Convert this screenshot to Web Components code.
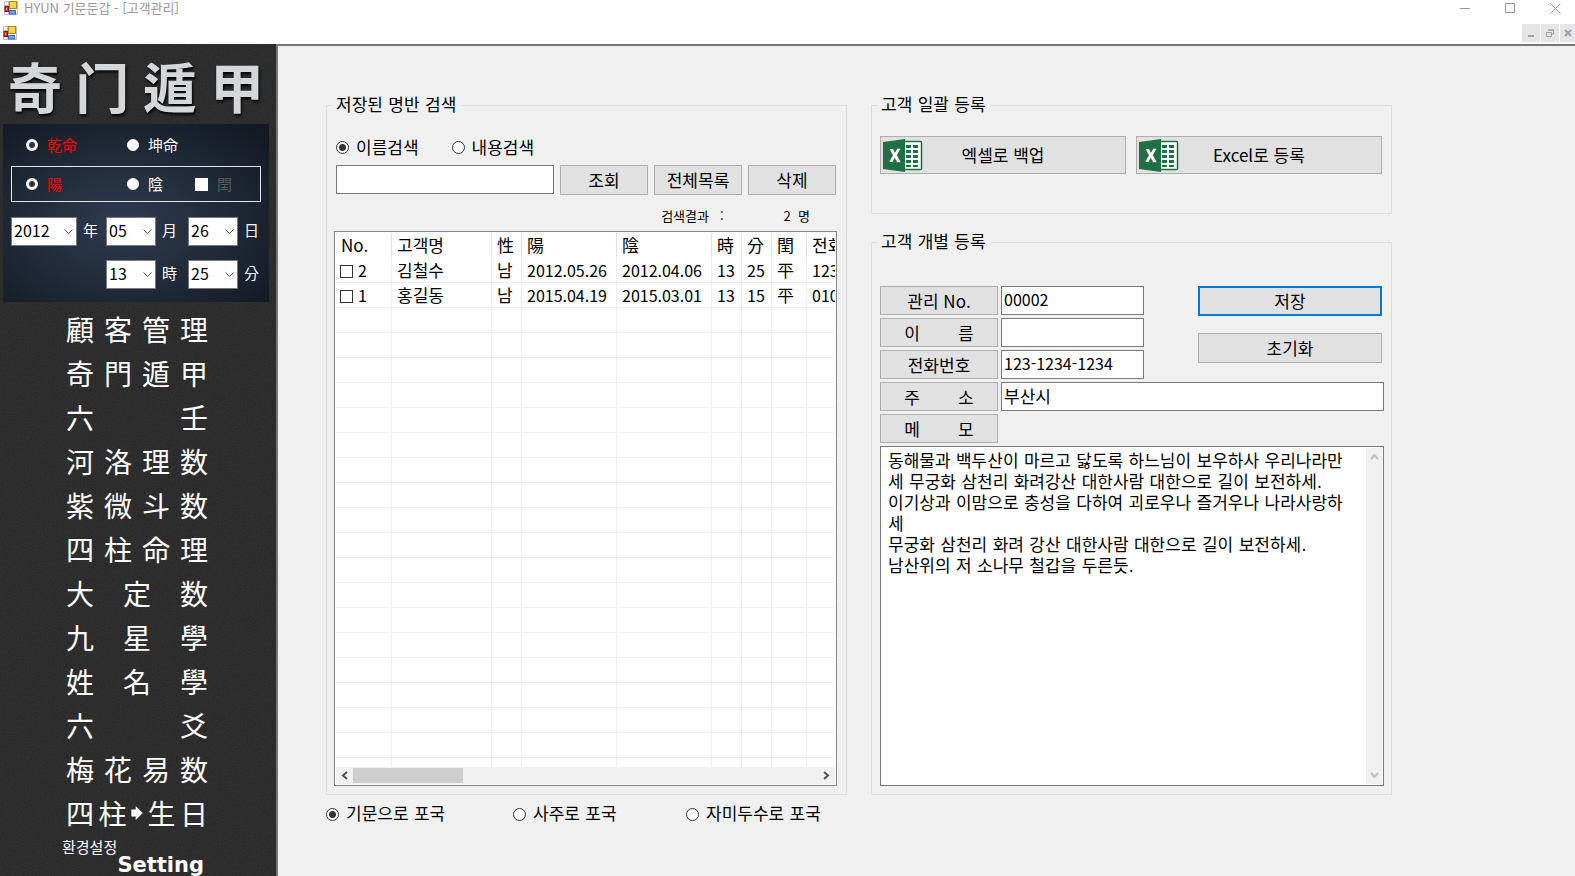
<!DOCTYPE html>
<html lang="ko">
<head>
<meta charset="utf-8">
<title>HYUN 기문둔갑 - [고객관리]</title>
<style>
  body {
    margin: 0;
    background: #f0f0f0;
    color: #000;
    font: 17px/24px "Noto Sans CJK KR", sans-serif;
  }
</style>
</head>
<body>
<hyun-app></hyun-app>

<script>
const html = String.raw; // For intellisense

// Rules shared by every element that draws form controls
const controls = html`
  * { box-sizing: border-box; }
  button, input, select, textarea {
    font: inherit;
    color: inherit;
    margin: 0;
    border-radius: 0;
    outline: none;
  }
  button {
    background: #e1e1e1;
    border: 1px solid #adadad;
    padding: 0;
    white-space: pre;
  }
  input[type="text"] {
    height: 29px;
    min-width: 0;
    padding: 0 2px 3px;
    background: #fff;
    border: 1px solid #7a7a7a;
  }
  input[type="radio"], input[type="checkbox"] {
    appearance: none;
    flex: none;
    width: 13px;
    height: 13px;
    background: #fff;
    border: 1px solid #333;
  }
  input[type="radio"] { border-radius: 50%; }
  input[type="radio"]:checked { background: radial-gradient(circle, #333 0 3px, #fff 4px); }
  label { display: flex; align-items: center; gap: 7px; white-space: nowrap; }
`;

const formIcon = html`
  <svg width="14" height="14" viewBox="0 0 14 14" aria-hidden="true">
    <path d="M.5 .5h13v13H.5zM0 4.500h5M4.500 0v14" fill="#fff" stroke="#bbb"/>
    <rect x="5.500" y=".5" width="7" height="7" fill="#ffd34d" stroke="#b8860b"/>
    <rect x="1" y="5.500" width="3.500" height="5" fill="#d33" stroke="#8d1010"/>
    <path d="M2 7h1v2H2z" fill="#ffb0a0"/>
    <rect x="5.500" y="9.500" width="6" height="3.500" fill="#6ea4ff" stroke="#3865c5"/>
  </svg>
`;

function define(name, render) {
  customElements.define(name, class extends HTMLElement {
    constructor() {
      super();
      this.attachShadow({ mode: 'open' });
      this.shadowRoot.innerHTML = render(this);
    }
  });
}

define('title-bar', () => html`
  <style>
    :host { display: block; background: #fff; color: #999; font-size: 13px; }
    div { display: flex; align-items: center; }
    .top { height: 16px; padding: 0 14px 0 4px; gap: 6px; }
    .top nav { margin-left: auto; display: flex; gap: 34px; }
    .child { box-sizing: border-box; height: 28px; padding: 6px 0 0 3px; justify-content: space-between; }
    .child nav { display: flex; gap: 1px; }
    button { border: 0; padding: 0; margin: 0; background: none; display: flex; }
    .child button { background: #e5e5e5; width: 18px; height: 18px; align-items: center; justify-content: center; }
    .child button:last-child { width: 15px; }
  </style>
  <div class="top">
    ${formIcon}<span>HYUN 기문둔갑 - [고객관리]</span>
    <nav>
      <button aria-label="최소화"><svg width="11" height="11"><path d="M0 5.500h10" stroke="#999"/></svg></button>
      <button aria-label="최대화"><svg width="11" height="11"><path d="M.5 .5h9v9h-9z" fill="none" stroke="#999"/></svg></button>
      <button aria-label="닫기"><svg width="11" height="11"><path d="M.5 .5l10 10M10.500 .5l-10 10" stroke="#999"/></svg></button>
    </nav>
  </div>
  <div class="child">
    ${formIcon}
    <nav>
      <button aria-label="창 최소화"><svg width="8" height="8"><path d="M1 7h6" stroke="#91a3b5" stroke-width="2"/></svg></button>
      <button aria-label="창 복원"><svg width="8" height="8"><path d="M2.500 2V1h5v4H6M0 3.500h6M.5 3v4.500h5V3M2 1h6" fill="none" stroke="#91a3b5"/></svg></button>
      <button aria-label="창 닫기"><svg width="8" height="8"><path d="M1 1l6 6M7 1l-6 6" stroke="#91a3b5" stroke-width="2"/></svg></button>
    </nav>
  </div>
`);

define('combo-box', (el) => html`
  <style>
    ${controls}
    :host { display: grid; align-items: center; height: 29px; }
    select {
      grid-area: 1 / 1;
      appearance: none;
      width: 100%;
      height: 29px;
      padding: 0 2px 3px;
      font-size: 16px;
      color: #000;
      background: #fff;
      border: 1px solid #7a7a7a;
    }
    svg { grid-area: 1 / 1; justify-self: end; margin-right: 4px; pointer-events: none; }
  </style>
  <select aria-label="${el.getAttribute('label')}"><option>${el.getAttribute('value')}</option></select>
  <svg width="9" height="6"><path d="M.5 .5l4 4 4-4" fill="none" stroke="#555"/></svg>
`);

define('birth-panel', () => html`
  <style>
    ${controls}
    :host {
      display: block;
      box-sizing: border-box;
      height: 178px;
      padding: 8px;
      color: #fff;
      font-size: 15px;
      background: radial-gradient(ellipse at 45% 55%, #2f3c50 0, #202a38 50%, #121720 100%);
    }
    .row { display: grid; grid-template-columns: 101px 68px auto; align-items: center; padding: 0 14px; height: 26px; border: 1px solid transparent; }
    .frame { height: 36px; margin-top: 8px; border-color: #e6e6e6; }
    .gray { color: #5a5a5a; }
    .red { color: #f00; }
    input[type="radio"], input[type="checkbox"] { border-color: #fff; }
    input[type="radio"] { width: 12px; height: 12px; }
    label { gap: 9px; }
    input[type="radio"]:checked { background: #333; border-width: 3px; }
    .date { display: grid; grid-template-columns: 66px 17px 50px 20px 50px auto; column-gap: 6px; row-gap: 14px; align-items: center; margin-top: 15px; }
    .date span { padding-bottom: 3px; }
    .hour { grid-column: 3; }
  </style>
  <div class="row">
    <label class="red"><input type="radio" name="sex" checked>乾命</label>
    <label><input type="radio" name="sex">坤命</label>
  </div>
  <div class="row frame">
    <label class="red"><input type="radio" name="cal" checked>陽</label>
    <label><input type="radio" name="cal">陰</label>
    <label class="gray"><input type="checkbox">閏</label>
  </div>
  <div class="date">
    <combo-box value="2012" label="年"></combo-box><span>年</span>
    <combo-box value="05" label="月"></combo-box><span>月</span>
    <combo-box value="26" label="日"></combo-box><span>日</span>
    <combo-box class="hour" value="13" label="時"></combo-box><span>時</span>
    <combo-box value="25" label="分"></combo-box><span>分</span>
  </div>
`);

const menu = ['顧客管理', '奇門遁甲', '六壬', '河洛理数', '紫微斗数', '四柱命理',
  '大定数', '九星學', '姓名學', '六爻', '梅花易数', '四柱➡生日'];

const spread = (text) => [...text].map((c) => c === '➡'
  ? html`<svg width="12" height="14" viewBox="0 0 13 16" role="img" aria-label="➡"><path d="M0 4h5V0l8 8-8 8v-4H0z" fill="#fff"/></svg>`
  : `<span>${c}</span>`).join('');

define('side-menu', () => html`
  <style>
    :host { display: block; position: relative; background: #262627; color: #fff; overflow: hidden; }
    .grain { position: absolute; inset: 0; width: 100%; height: 100%; opacity: .1; }
    .content { position: relative; }
    h1 {
      display: flex;
      justify-content: space-between;
      margin: 0;
      padding: 0 12px 0 8px;
      height: 80px;
      font: bold 54px/84px "Noto Sans CJK SC", sans-serif;
      color: #d3d7d9;
      text-shadow: 1px 2px 3px #000;
    }
    birth-panel { margin: 0 7px 5px 3px; }
    a { color: inherit; text-decoration: none; }
    .item {
      display: flex;
      justify-content: space-between;
      align-items: center;
      margin: 0 68px 0 66px;
      height: 44px;
      font-size: 28px;
    }
    .setup { display: flex; flex-direction: column; width: 142px; margin: 2px 0 0 62px; font-size: 15px; line-height: 20px; }
    .setup b { align-self: end; font: bold 21px/16px "DejaVu Sans", sans-serif; }
  </style>
  <svg class="grain" aria-hidden="true">
    <filter id="grain">
      <feTurbulence type="fractalNoise" baseFrequency=".8" numOctaves="2"/>
      <feColorMatrix type="saturate" values="0"/>
    </filter>
    <rect width="100%" height="100%" filter="url(#grain)"/>
  </svg>
  <div class="content">
    <h1><span>奇</span><span>门</span><span>遁</span><span>甲</span></h1>
    <birth-panel></birth-panel>
    <nav>
      ${menu.map((text) => html`<a class="item" href="#" aria-label="${text}">${spread(text)}</a>`).join('')}
      <a class="setup" href="#"><span>환경설정</span><b>Setting</b></a>
    </nav>
  </div>
`);

define('group-box', (el) => html`
  <style>
    :host { display: flex; min-width: 0; }
    fieldset {
      box-sizing: border-box;
      flex: 1;
      min-width: 0;
      display: flex;
      flex-direction: column;
      margin: 0;
      padding: 0 8px 8px;
      border: 1px solid #dcdcdc;
    }
    legend { padding: 0 5px 0 4px; margin-left: -3px; font-family: "DejaVu Sans", "Noto Sans CJK KR", sans-serif; }
  </style>
  <fieldset>
    <legend>${el.getAttribute('caption')}</legend>
    <slot></slot>
  </fieldset>
`);

const columns = [['No.', 56], ['고객명', 100], ['性', 30], ['陽', 95], ['陰', 95],
  ['時', 30], ['分', 30], ['閏', 35], ['전화', 120]];
const customers = [
  ['2', '김철수', '남', '2012.05.26', '2012.04.06', '13', '25', '平', '123-1234-1234'],
  ['1', '홍길동', '남', '2015.04.19', '2015.03.01', '13', '15', '平', '010'],
];
const cell = (text, i) => {
  if (text === undefined) return '<td></td>';
  const check = i === 0 ? `<input type="checkbox" aria-label="${text}">` : '';
  return `<td class="${/\d/.test(text) ? 'num' : ''}">${check}${text}</td>`;
};

define('customer-list', () => html`
  <style>
    ${controls}
    :host {
      box-sizing: border-box;
      display: flex;
      flex-direction: column;
      min-height: 200px;
      padding: 1px;
      background: #fff;
      border: 1px solid #828790;
    }
    .view { flex: 1 1 0; min-height: 0; overflow: hidden; }
    table { table-layout: fixed; width: 591px; border-collapse: separate; border-spacing: 0; }
    th, td {
      height: 25px;
      padding: 0 0 0 5px;
      font-weight: normal;
      text-align: left;
      line-height: 24px;
      white-space: nowrap;
      border-right: 1px solid #efefef;
      border-bottom: 1px solid #efefef;
    }
    th { border-right-color: #e0e0e0; border-bottom-color: #fff; }
    td:first-child { padding-left: 4px; }
    .num { font-size: 16px; }
    td input[type="checkbox"] { vertical-align: -1px; margin-right: 5px; }
    .scroll { display: flex; align-items: center; height: 17px; padding: 0 5px; background: #f0f0f0; }
    .thumb { width: 110px; height: 15px; margin: 0 auto 0 4px; background: #cdcdcd; }
  </style>
  <div class="view">
    <table>
      <colgroup>${columns.map(([, w]) => `<col style="width: ${w}px">`).join('')}</colgroup>
      <thead><tr>${columns.map(([name]) => `<th>${name}</th>`).join('')}</tr></thead>
      <tbody>
        ${Array.from({ length: 21 }, (_, r) =>
          `<tr>${columns.map((_, i) => cell(customers[r]?.[i], i)).join('')}</tr>`).join('')}
      </tbody>
    </table>
  </div>
  <div class="scroll">
    <svg width="8" height="9"><path d="M6 1L2 4.500 6 8" fill="none" stroke="#505050" stroke-width="2"/></svg>
    <div class="thumb"></div>
    <svg width="8" height="9"><path d="M2 1l4 3.500L2 8" fill="none" stroke="#505050" stroke-width="2"/></svg>
  </div>
`);

define('customer-search', () => html`
  <style>
    ${controls}
    :host { flex: 1; display: flex; flex-direction: column; padding-top: 18px; }
    .modes { display: flex; gap: 33px; height: 24px; padding-left: 1px; }
    .query { display: flex; gap: 6px; margin: 6px 2px 0 1px; }
    .query input { flex: 1; }
    .query button { width: 88px; height: 30px; }
    .result { display: flex; justify-content: end; gap: 60px; padding-right: 28px; margin: 10px 0 4px; font-size: 13px; line-height: 22px; white-space: pre; }
    customer-list { flex: 1; margin: 0 1px 0 -1px; }
  </style>
  <div class="modes">
    <label><input type="radio" name="mode" checked>이름검색</label>
    <label><input type="radio" name="mode">내용검색</label>
  </div>
  <div class="query">
    <input type="text" aria-label="검색어">
    <button>조회</button>
    <button>전체목록</button>
    <button>삭제</button>
  </div>
  <div class="result"><span>검색결과   :</span><span>2  명</span></div>
  <customer-list></customer-list>
`);

define('chart-choice', () => html`
  <style>
    ${controls}
    :host { display: grid; grid-template-columns: 187px 173px auto; height: 24px; font-family: "DejaVu Sans", "Noto Sans CJK KR", sans-serif; }
  </style>
  <label><input type="radio" name="chart" checked>기문으로 포국</label>
  <label><input type="radio" name="chart">사주로 포국</label>
  <label><input type="radio" name="chart">자미두수로 포국</label>
`);

define('excel-buttons', () => {
  const icon = html`
    <svg width="40" height="33" viewBox="0 0 40 33" aria-hidden="true">
      <rect x="20" y="2.500" width="18.500" height="28" rx="1" fill="#fff" stroke="#1e7145" stroke-width="1.500"/>
      <path d="M23 6h5v3h-5zM30 6h5v3h-5zM23 11h5v3h-5zM30 11h5v3h-5zM23 16h5v3h-5zM30 16h5v3h-5zM23 21h5v3h-5zM30 21h5v3h-5zM23 26h5v2h-5zM30 26h5v2h-5z" fill="#1e7145"/>
      <path d="M0 3L22 0v33L0 30z" fill="#1e7145"/>
      <path d="M6.500 10h3.500l2 4 2.300-4.300h3.200L13.800 16.300l4 7h-3.600l-2.400-4.600-2.300 4.200H6.200l3.800-6.600z" fill="#fff"/>
    </svg>`;
  return html`
    <style>
      ${controls}
      :host { display: flex; gap: 10px; padding: 19px 1px 0 0; }
      button { flex: 1; height: 38px; display: grid; grid-template-columns: 40px 1fr 40px; align-items: center; padding: 0 2px; }
    </style>
    <button>${icon}<span>엑셀로 백업</span></button>
    <button>${icon}<span>Excel로 등록</span></button>
  `;
});

const memo = `동해물과 백두산이 마르고 닳도록 하느님이 보우하사 우리나라만세 무궁화 삼천리 화려강산 대한사람 대한으로 길이 보전하세.
이기상과 이맘으로 충성을 다하여 괴로우나 즐거우나 나라사랑하세
무궁화 삼천리 화려 강산 대한사람 대한으로 길이 보전하세.
남산위의 저 소나무 철갑을 두른듯.`;
const gap = ' '.repeat(8);

define('customer-form', () => html`
  <style>
    ${controls}
    :host { flex: 1; display: flex; flex-direction: column; padding-top: 32px; margin-right: -1px; }
    .top { display: flex; justify-content: space-between; }
    .fields { display: grid; grid-template-columns: 118px 143px; gap: 3px; }
    .fields button, .wide button { height: 29px; }
    .num { font-size: 16px; }
    .wide { display: grid; grid-template-columns: 118px 1fr; gap: 3px; margin: 3px 0; }
    .actions { display: grid; gap: 17px; width: 184px; align-content: start; margin-right: 2px; }
    .actions button { height: 30px; }
    .actions .save { border: 2px solid #0078d7; }
    .memo { flex: 1; display: flex; min-height: 120px; padding: 1px; background: #fff; border: 1px solid #7a7a7a; }
    textarea {
      flex: 1;
      min-width: 0;
      padding: 3px 16px 0 6px;
      border: 0;
      resize: none;
      overflow: hidden;
      font-family: "DejaVu Sans", "Noto Sans CJK KR", sans-serif;
      line-height: 21px;
      word-break: break-all;
    }
    .bar { display: flex; flex-direction: column; justify-content: space-between; align-items: center; width: 16px; padding: 5px 0; background: #f0f0f0; }
  </style>
  <div class="top">
    <div class="fields">
      <button id="no">관리 No.</button><input type="text" class="num" aria-labelledby="no" value="00002">
      <button id="name">이${gap}름</button><input type="text" aria-labelledby="name">
      <button id="tel">전화번호</button><input type="text" class="num" aria-labelledby="tel" value="123-1234-1234">
    </div>
    <div class="actions">
      <button class="save">저장</button>
      <button>초기화</button>
    </div>
  </div>
  <div class="wide">
    <button id="addr">주${gap}소</button><input type="text" aria-labelledby="addr" value="부산시">
    <button id="memo">메${gap}모</button>
  </div>
  <div class="memo">
    <textarea aria-labelledby="memo">${memo}</textarea>
    <div class="bar">
      <svg width="9" height="8"><path d="M1 6l3.500-4L8 6" fill="none" stroke="#bfbfbf" stroke-width="2"/></svg>
      <svg width="9" height="8"><path d="M1 2l3.500 4L8 2" fill="none" stroke="#bfbfbf" stroke-width="2"/></svg>
    </div>
  </div>
`);

define('hyun-app', () => html`
  <style>
    :host { display: flex; flex-direction: column; min-height: 100vh; }
    .body { flex: 1; display: grid; grid-template-columns: 276px 1fr; }
    main {
      display: grid;
      grid-template-columns: repeat(2, minmax(0, 521px));
      grid-template-rows: auto 1fr auto;
      column-gap: 24px;
      padding: 47px 48px 50px;
      border: solid #777;
      border-width: 2px 0 0 2px;
    }
    .search { grid-row: 1 / 3; }
    .batch { height: 121px; margin-bottom: 16px; }
    chart-choice { margin-top: 7px; }
  </style>
  <title-bar></title-bar>
  <div class="body">
    <side-menu></side-menu>
    <main>
      <group-box class="search" caption="저장된 명반 검색"><customer-search></customer-search></group-box>
      <group-box class="batch" caption="고객 일괄 등록"><excel-buttons></excel-buttons></group-box>
      <group-box caption="고객 개별 등록"><customer-form></customer-form></group-box>
      <chart-choice></chart-choice>
    </main>
  </div>
`);
</script>
</body>
</html>
